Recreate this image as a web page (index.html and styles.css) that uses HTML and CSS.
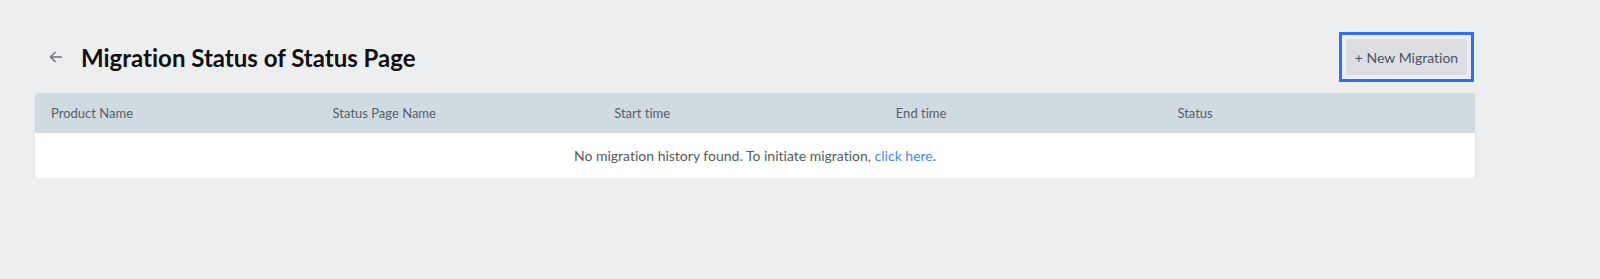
FILE: index.html
```html
<!DOCTYPE html>
<html lang="en">
<head>
    <meta charset="UTF-8">
    <title>Migration Status</title>
    <link rel="stylesheet" href="styles.css">
</head>
<body>
    <div class="page">
        <div class="head">
            <div class="title-wrap">
                <a class="back" href="#">
                    <svg width="14" height="14" viewBox="0 0 14 14" fill="none" stroke="#6b6f75" stroke-width="1.3">
                        <path d="M13 7H1.5M6.5 2L1.5 7l5 5"/>
                    </svg>
                </a>
                <h1>Migration Status of Status Page</h1>
            </div>
            <div class="btn-focus">
                <button class="new-btn">+ New Migration</button>
            </div>
        </div>

        <div class="table">
            <div class="thead">
                <div>Product Name</div>
                <div>Status Page Name</div>
                <div>Start time</div>
                <div>End time</div>
                <div>Status</div>
            </div>
            <div class="empty">
                No migration history found. To initiate migration,&nbsp;<a href="#">click here</a>.
            </div>
        </div>
    </div>
</body>
</html>
```

FILE: styles.css
```css
html{
    font-family: Lato, "Open Sans", sans-serif;
    font-variant-ligatures: none;
    background-color: #edeef0;
}
body{
    margin: 0;
}
.page{
    padding: 32px 125px 0 35px;
}
.head{
    display: flex;
    justify-content: space-between;
    align-items: center;
    margin-bottom: 11px;
}
.title-wrap{
    display: flex;
    align-items: center;
}
.back{
    display: flex;
    margin-left: 14px;
    margin-right: 18px;
}
h1{
    margin: 0;
    font-size: 24px;
    font-weight: 700;
    color: #111;
}
.btn-focus{
    border: 3px solid #2f6ff9;
    padding: 4px;
    margin-right: 1px;
    display: flex;
}
.new-btn{
    font-family: Lato, sans-serif;
    font-variant-ligatures: none;
    font-size: 14px;
    color: #4a5466;
    background-color: #dcdee2;
    border: none;
    border-radius: 2px;
    width: 121px;
    height: 36px;
    padding: 0;
}
.table{
    background-color: white;
    border-radius: 3px;
    box-shadow: 0 1px 2px rgba(0,0,0,0.1);
    overflow: hidden;
}
.thead{
    display: grid;
    grid-template-columns: repeat(5, 1fr);
    padding: 0 16px;
    height: 40px;
    align-items: center;
    background-color: #cfdbe1;
    font-size: 13px;
    color: #586069;
}
.empty{
    height: 45px;
    display: flex;
    align-items: center;
    justify-content: center;
    font-size: 14px;
    color: #555a60;
}
.empty a{
    color: #3d8ee6;
    text-decoration: none;
}
```
